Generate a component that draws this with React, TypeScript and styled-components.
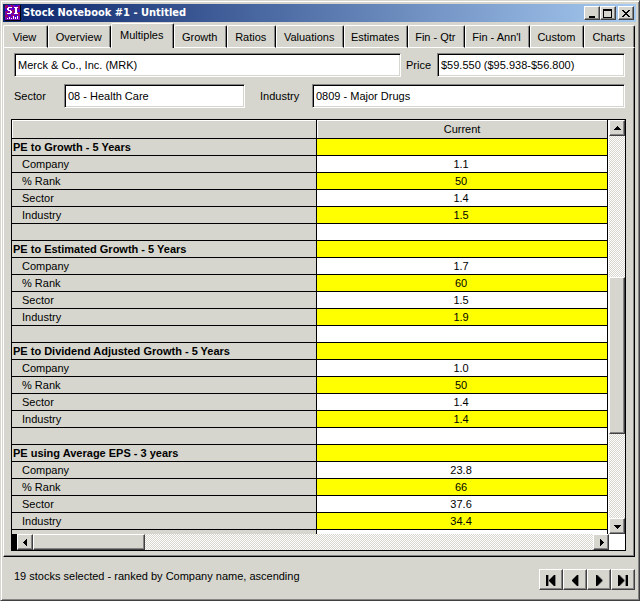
import React, { useState } from "react";
import styled, { createGlobalStyle, css } from "styled-components";

const face = "#d6d6ce";
const shade = "#848484";

const GlobalStyle = createGlobalStyle`
  * { box-sizing: border-box; }
  body {
    margin: 0;
    background: ${face};
    color: #000;
    font: 11px/16px "Liberation Sans", Arial, sans-serif;
  }
  button, input {
    font: inherit;
    color: inherit;
    border-radius: 0;
    margin: 0;
  }
`;

const raised = css`
  background: ${face};
  border: 1px solid;
  border-color: #fff #404040 #404040 #fff;
  box-shadow: inset -1px -1px 0 ${shade};
`;

const Window = styled.main`
  display: flex;
  flex-direction: column;
  height: 100vh;
  min-height: 400px;
  padding: 2px 3px 0 2px;
  background: ${face};
  border: 1px solid;
  border-color: ${face} #404040 #404040 ${face};
  box-shadow: inset 1px 1px 0 #fff, inset -1px -1px 0 ${shade};
`;

const TitleBar = styled.header`
  display: flex;
  align-items: center;
  flex: none;
  height: 18px;
  margin-top: 1px;
  padding: 0 2px;
  background: linear-gradient(to right, #0a246a, #a6caf0);
  color: #fff;
`;

const Title = styled.h1`
  flex: 1;
  margin: 0 0 0 2px;
  font: bold 11px/18px "DejaVu Sans Condensed", "DejaVu Sans", sans-serif;
  white-space: nowrap;
`;

const CaptionButton = styled.button<{ $spaced?: boolean }>`
  ${raised}
  display: grid;
  place-items: center;
  width: 16px;
  height: 14px;
  padding: 0;
  margin-left: ${(p) => (p.$spaced ? 2 : 0)}px;
`;

const TabList = styled.div`
  display: flex;
  align-items: flex-end;
  flex: none;
  height: 26px;
  margin-right: 1px;
`;

const Tab = styled.button<{ $share: number; $active: boolean }>`
  flex: ${(p) => p.$share} 1 0;
  min-width: 0;
  height: ${(p) => (p.$active ? 25 : 23)}px;
  padding: 0 2px ${(p) => (p.$active ? 3 : 0)}px 0;
  background: ${face};
  border: 1px solid;
  border-color: #fff #000 ${(p) => (p.$active ? face : "#fff")} #fff;
  border-bottom-width: ${(p) => (p.$active ? 0 : 1)}px;
  border-radius: 2px 2px 0 0;
  box-shadow: inset -1px 0 0 ${shade};
  white-space: nowrap;
`;

const Page = styled.section`
  display: flex;
  flex-direction: column;
  flex: 1;
  min-height: 0;
  margin-right: 1px;
  padding: 5px 8px 5px 7px;
  border: 1px solid;
  border-color: transparent #000 #000 #fff;
  border-top: 0;
  box-shadow: inset -1px -1px 0 ${shade};
`;

const FieldRow = styled.div`
  display: flex;
  align-items: center;
  margin: 0 1px 7px 3px;
`;

const Label = styled.label<{ $width: number }>`
  flex: none;
  width: ${(p) => p.$width}px;
`;

const TextBox = styled.input<{ $share: number; $gap?: number }>`
  flex: ${(p) => p.$share} 1 0;
  min-width: 0;
  height: 24px;
  padding: 0 3px;
  margin-right: ${(p) => p.$gap ?? 0}px;
  background: #fff;
  border: 1px solid;
  border-color: ${shade} #fff #fff ${shade};
  box-shadow: inset 1px 1px 0 #000, inset -1px -1px 0 ${face};
  outline: 0;
`;

const GridFrame = styled.div`
  display: grid;
  grid-template-columns: minmax(0, 1fr) 16px;
  grid-template-rows: minmax(0, 1fr) 16px;
  flex: 1;
  min-height: 0;
  margin-top: 4px;
  border: 1px solid #000;
  background: #fff;
`;

const Viewport = styled.div`
  overflow: hidden;
  padding-right: 1px;
`;

const Table = styled.table`
  width: 100%;
  border-collapse: separate;
  border-spacing: 0;
  table-layout: fixed;
`;

const HeadCell = styled.th<{ $width?: string }>`
  width: ${(p) => p.$width ?? "auto"};
  height: 19px;
  padding: 0;
  background: ${face};
  border-right: 1px solid #000;
  border-bottom: 1px solid #000;
  box-shadow: inset 1px 1px 0 #fff;
  font-weight: normal;
`;

const NameCell = styled.th<{ $group: boolean }>`
  height: 17px;
  padding: 0 0 0 ${(p) => (p.$group ? 1 : 10)}px;
  background: ${face};
  border-right: 1px solid #000;
  border-bottom: 1px solid #000;
  font-weight: ${(p) => (p.$group ? "bold" : "normal")};
  text-align: left;
  white-space: nowrap;
`;

const ValueCell = styled.td<{ $marked: boolean }>`
  height: 17px;
  padding: 0 2px 0 0;
  background: ${(p) => (p.$marked ? "#ff0" : "#fff")};
  border-right: 1px solid #000;
  border-bottom: 1px solid #000;
  text-align: center;
`;

const track = css`
  background: repeating-conic-gradient(#fff 0 25%, ${face} 0 50%) 0 0 / 2px 2px;
`;

const VScroll = styled.div`
  ${track}
  display: flex;
  flex-direction: column;
`;

const HScroll = styled.div`
  ${track}
  display: flex;
  border-left: 5px solid #000;
`;

const ScrollButton = styled.button`
  ${raised}
  display: grid;
  place-items: center;
  flex: none;
  width: 16px;
  height: 16px;
  padding: 0;
`;

const Space = styled.div<{ $share: number }>`
  flex: ${(p) => p.$share} 1 0;
`;

const Thumb = styled.div<{ $share: number }>`
  ${raised}
  flex: ${(p) => p.$share} 1 0;
`;

const StatusBar = styled.footer`
  display: flex;
  align-items: center;
  justify-content: space-between;
  flex: none;
  height: 43px;
  padding: 2px 1px 0 11px;
`;

const Status = styled.p`
  margin: 0 0 8px;
`;

const NavGroup = styled.nav`
  display: flex;
`;

const NavButton = styled.button`
  ${raised}
  display: grid;
  place-items: center;
  width: 24px;
  height: 21px;
  padding: 0;
`;

const AppIcon = () => (
  <svg width="16" height="16" viewBox="0 0 16 16" shapeRendering="crispEdges" aria-hidden="true">
    <path fill="#7300b5" d="M0 0h16v16H0z" />
    <path fill="#9c0063" d="M0 0h3v3H0zM6 0h2v2H6zM13 1h2v3h-2zM1 6h2v2H1zM7 5h2v3H7zM12 7h3v2h-3zM0 10h3v2H0zM6 10h4v1H6zM12 10h3v1h-3z" />
    <path fill="#3900e7" d="M3 0h2v1H3zM10 0h3v1h-3zM0 4h2v2H0zM7 3h2v1H7zM13 5h2v2h-2zM3 10h3v1H3zM10 10h2v2h-2z" />
    <path fill="#fff" d="M3 2h4v1H3zM2 3h2v2H2zM3 5h3v1H3zM5 6h2v2H5zM2 8h4v1H2zM9 2h4v1H9zM10 3h2v5h-2zM9 8h4v1H9z" />
    <path fill="#fff" d="M2 13h1v1H2zM4 12h1v2H4zM6 13h1v1H6zM8 11h1v3H8zM10 12h1v2h-1zM12 11h1v3h-1z" />
    <path fill="#000" d="M0 15h16v1H0zM15 0h1v16h-1z" />
  </svg>
);

const arrows = {
  up: "M4 1h1v1h1v1h1v1h1v1H1V4h1V3h1V2h1z",
  down: "M1 2h7v1H7v1H6v1H5v1H4V5H3V4H2V3H1z",
  left: "M5 0h1v7H5V6H4V5H3V4H2V3h1V2h1V1h1z",
  right: "M3 0h1v1h1v1h1v1h1v1H6v1H5v1H4v1H3z",
};

const Arrow = ({ dir }: { dir: keyof typeof arrows }) => (
  <svg width="9" height="7" viewBox="0 0 9 7" shapeRendering="crispEdges" aria-hidden="true">
    <path d={arrows[dir]} />
  </svg>
);

const NavIcon = ({ d, shadow }: { d: string; shadow: string }) => (
  <svg width="14" height="12" viewBox="0 0 14 12" aria-hidden="true">
    <path fill={shade} d={shadow} />
    <path d={d} />
  </svg>
);

const tabs: [string, number][] = [
  ["View", 44],
  ["Overview", 64],
  ["Multiples", 63],
  ["Growth", 53],
  ["Ratios", 48],
  ["Valuations", 69],
  ["Estimates", 64],
  ["Fin - Qtr", 57],
  ["Fin - Ann'l", 66],
  ["Custom", 54],
  ["Charts", 50],
];

const groups: [string, string[]][] = [
  ["PE to Growth - 5 Years", ["1.1", "50", "1.4", "1.5"]],
  ["PE to Estimated Growth - 5 Years", ["1.7", "60", "1.5", "1.9"]],
  ["PE to Dividend Adjusted Growth - 5 Years", ["1.0", "50", "1.4", "1.4"]],
  ["PE using Average EPS - 3 years", ["23.8", "66", "37.6", "34.4"]],
];

const measures = ["Company", "% Rank", "Sector", "Industry"];

const rows = groups.flatMap(([name, values]) => [
  { name, value: "", group: true },
  ...measures.map((measure, i) => ({ name: measure, value: values[i], group: false })),
  { name: "", value: "", group: false },
]);

const navigation: [string, string, string][] = [
  ["First", "M2 1h2v11H2zM10 1h1v11h-1L5 7V6z", "M4 1h1v11H4zM11 1h1v11h-1z"],
  ["Previous", "M9 1h1v11H9L4 7V6z", "M10 1h1v11h-1z"],
  ["Next", "M4 1h1l5 5v1l-5 5H4z", "M5 1h1l5 5v1l-5 5H5z"],
  ["Last", "M2 1h1l5 5v1l-5 5H2zM10 1h2v11h-2z", "M3 1h1l5 5v1l-5 5H3zM9 1h1v11H9z"],
];

export default function App() {
  const [active, setActive] = useState("Multiples");

  return (
    <Window>
      <GlobalStyle />
      <TitleBar>
        <AppIcon />
        <Title>Stock Notebook #1 - Untitled</Title>
        <CaptionButton aria-label="Minimize">
          <svg width="10" height="9" shapeRendering="crispEdges"><path d="M2 7h6v2H2z" /></svg>
        </CaptionButton>
        <CaptionButton aria-label="Maximize">
          <svg width="10" height="9" shapeRendering="crispEdges">
            <path fillRule="evenodd" d="M0 0h9v9H0zM1 2v6h7V2z" />
          </svg>
        </CaptionButton>
        <CaptionButton aria-label="Close" $spaced>
          <svg width="8" height="7" shapeRendering="crispEdges">
            <path d="M0 0h2v1h1v1h2V1h1V0h2v1H7v1H6v1H5v1h1v1h1v1h1v1H6V6H5V5H3v1H2v1H0V6h1V5h1V4h1V3H2V2H1V1H0z" />
          </svg>
        </CaptionButton>
      </TitleBar>

      <TabList role="tablist">
        {tabs.map(([name, share]) => (
          <Tab
            key={name}
            role="tab"
            aria-selected={name === active}
            $share={share}
            $active={name === active}
            onClick={() => setActive(name)}
          >
            {name}
          </Tab>
        ))}
      </TabList>

      <Page>
        <FieldRow>
          <TextBox $share={379} $gap={5} aria-label="Company" defaultValue="Merck & Co., Inc. (MRK)" />
          <Label htmlFor="price" $width={31}>Price</Label>
          <TextBox id="price" $share={180} defaultValue="$59.550 ($95.938-$56.800)" />
        </FieldRow>
        <FieldRow>
          <Label htmlFor="sector" $width={50}>Sector</Label>
          <TextBox id="sector" $share={173} $gap={15} defaultValue="08 - Health Care" />
          <Label htmlFor="industry" $width={52}>Industry</Label>
          <TextBox id="industry" $share={305} defaultValue="0809 - Major Drugs" />
        </FieldRow>

        <GridFrame>
          <Viewport>
            <Table>
              <thead>
                <tr>
                  <HeadCell $width="51.2%" aria-label="Measure" />
                  <HeadCell scope="col">Current</HeadCell>
                </tr>
              </thead>
              <tbody>
                {rows.map((row, i) => (
                  <tr key={i}>
                    <NameCell scope="row" $group={row.group}>{row.name}</NameCell>
                    <ValueCell $marked={i % 2 === 0}>{row.value}</ValueCell>
                  </tr>
                ))}
              </tbody>
            </Table>
          </Viewport>
          <VScroll>
            <ScrollButton aria-label="Scroll up"><Arrow dir="up" /></ScrollButton>
            <Space $share={142} />
            <Thumb $share={156} />
            <Space $share={85} />
            <ScrollButton aria-label="Scroll down"><Arrow dir="down" /></ScrollButton>
          </VScroll>
          <HScroll>
            <ScrollButton aria-label="Scroll left"><Arrow dir="left" /></ScrollButton>
            <Thumb $share={110} />
            <Space $share={449} />
            <ScrollButton aria-label="Scroll right"><Arrow dir="right" /></ScrollButton>
          </HScroll>
        </GridFrame>
      </Page>

      <StatusBar>
        <Status>19 stocks selected - ranked by Company name, ascending</Status>
        <NavGroup aria-label="Stocks">
          {navigation.map(([name, d, shadow]) => (
            <NavButton key={name} aria-label={name}><NavIcon d={d} shadow={shadow} /></NavButton>
          ))}
        </NavGroup>
      </StatusBar>
    </Window>
  );
}
